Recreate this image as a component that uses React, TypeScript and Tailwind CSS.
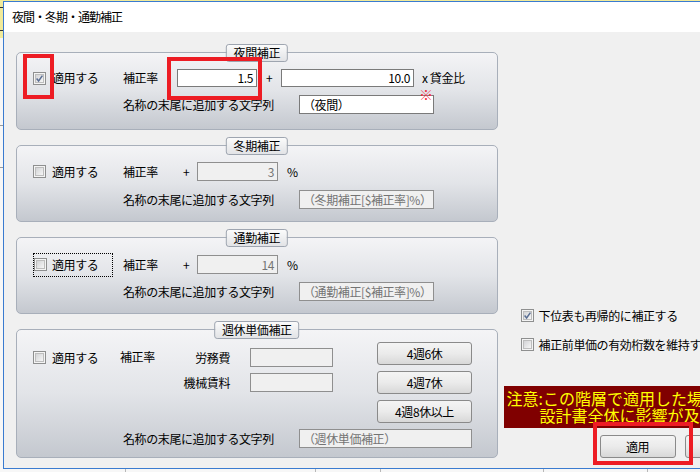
import type { ReactNode } from 'react';

function Check({ checked = false }: { checked?: boolean }) {
  return (
    <span className="relative w-[13px] h-[13px] flex-shrink-0 border border-[#8e8f8f] bg-[#f4f4f4] p-[1px] flex">
      <span className="flex-1 border border-[#bdbdbd] bg-linear-to-br from-[#d3d4d6] to-[#f6f6f6]" />
      {checked && (
        <svg width="13" height="13" viewBox="0 0 13 13" className="absolute -left-px -top-px">
          <path d="M3.6 6.6 L5.6 9 L9.4 3.6" fill="none" stroke="#5a6e93" strokeWidth="1.5" />
        </svg>
      )}
    </span>
  );
}

interface FieldProps {
  value?: string;
  className?: string;
  right?: boolean;
  disabled?: boolean;
}

function Field({ value = '', className = '', right = false, disabled = false }: FieldProps) {
  return (
    <div
      className={`flex items-center px-[3px] border whitespace-nowrap overflow-hidden ${
        disabled ? 'bg-[#f0f0f0] border-[#8f8f8f] text-[#747474]' : 'bg-white border-[#7a7a7a] text-black'
      } ${right ? 'justify-end' : ''} ${className}`}
    >
      {value}
    </div>
  );
}

function Btn({ label, className = '' }: { label: string; className?: string }) {
  return (
    <div
      className={`flex items-center justify-center rounded-[3px] border border-[#8a8a8a] bg-linear-to-b from-[#f4f4f4] via-[#ebebeb] to-[#d8d8d8] whitespace-nowrap ${className}`}
    >
      {label}
    </div>
  );
}

function Group({ title, className = '', children }: { title: string; className?: string; children: ReactNode }) {
  return (
    <div
      className={`relative rounded-[5px] border border-[#a8afba] bg-linear-to-b from-[#f4f4f6] via-[#e2e4e8] to-[#c4c8cf] pl-[16px] ${className}`}
    >
      <div className="absolute -top-[9px] left-1/2 -translate-x-1/2 h-[18px] px-[7px] flex items-center rounded-[3px] border border-[#9ea5b0] bg-linear-to-b from-[#fbfbfb] to-[#e2e3e6] whitespace-nowrap">
        {title}
      </div>
      {children}
    </div>
  );
}

function Apply({ checked = false, focused = false }: { checked?: boolean; focused?: boolean }) {
  if (focused) {
    return (
      <div className="w-[90px] flex items-center">
        <div className="w-[80px] h-[24px] flex-shrink-0 border border-dotted border-black flex items-center gap-[5px]">
          <Check checked={checked} />
          <span>適用する</span>
        </div>
      </div>
    );
  }
  return (
    <div className="w-[90px] flex items-center gap-[6px]">
      <Check checked={checked} />
      <span>適用する</span>
    </div>
  );
}

export default function App() {
  return (
    <div className="relative w-[700px] h-[472px] overflow-hidden bg-[#f7f7f7] font-['Noto_Sans_CJK_JP',sans-serif] text-[12px] leading-[16px] tracking-[-0.4px] text-black">
      {/* spreadsheet behind the dialog */}
      <div className="absolute inset-x-0 top-0 h-[38px] bg-[#f1ea9a]" />
      <div className="absolute left-0 w-[3px] top-[7px] h-px bg-[#333]" />
      <div className="absolute left-0 w-[3px] top-[30px] h-px bg-[#333]" />
      <div className="absolute left-0 w-[3px] top-[125px] h-px bg-[#9a9a9a]" />
      <div className="absolute left-0 w-[3px] top-[167px] h-px bg-[#9a9a9a]" />
      <div className="absolute left-[125px] top-[469px] w-px h-[3px] bg-[#b8b8b8]" />
      <div className="absolute left-[315px] top-[469px] w-px h-[3px] bg-[#b8b8b8]" />
      <div className="absolute left-[380px] top-[469px] w-px h-[3px] bg-[#b8b8b8]" />
      <div className="absolute left-[543px] top-[469px] w-px h-[3px] bg-[#b8b8b8]" />
      <div className="absolute left-[647px] top-[469px] w-px h-[3px] bg-[#b8b8b8]" />

      {/* dialog window */}
      <div className="absolute left-[3px] top-[1px] w-[760px] h-[468px] border border-[#3a7bd0] bg-[#f0f0f0] flex flex-col">
        <div className="h-[30px] bg-white flex items-center pl-[8px] tracking-[-1px]">夜間・冬期・通勤補正</div>

        <div className="flex-1 flex pt-[20px] pl-[12px]">
          <div className="w-[487px] flex flex-col">
            <Group title="夜間補正" className="h-[78px]">
              <div className="flex items-center h-[18px] mt-[16px]">
                <Apply checked />
                <span className="w-[54px]">補正率</span>
                <Field value="1.5" right className="w-[80px] h-[18px]" />
                <span className="w-[24px] pl-[9px]">+</span>
                <Field value="10.0" right className="w-[133px] h-[18px]" />
                <span className="ml-[8px]">x 貸金比</span>
              </div>
              <div className="flex items-center mt-[8px]">
                <span className="ml-[90px] w-[176px]">名称の末尾に追加する文字列</span>
                <Field value="（夜間）" className="w-[135px] h-[19px]" />
              </div>
            </Group>

            <Group title="冬期補正" className="h-[77px] mt-[15px]">
              <div className="flex items-center h-[19px] mt-[16px]">
                <Apply />
                <span className="w-[60px]">補正率</span>
                <span className="w-[14px]">+</span>
                <Field value="3" right disabled className="w-[81px] h-[19px]" />
                <span className="ml-[9px]">%</span>
              </div>
              <div className="flex items-center mt-[9px]">
                <span className="ml-[90px] w-[176px]">名称の末尾に追加する文字列</span>
                <Field value="（冬期補正[$補正率]%）" disabled className="w-[135px] h-[19px]" />
              </div>
            </Group>

            <Group title="通勤補正" className="h-[77px] mt-[15px]">
              <div className="flex items-center h-[19px] mt-[17px]">
                <Apply focused />
                <span className="w-[60px]">補正率</span>
                <span className="w-[14px]">+</span>
                <Field value="14" right disabled className="w-[81px] h-[19px]" />
                <span className="ml-[9px]">%</span>
              </div>
              <div className="flex items-center mt-[8px]">
                <span className="ml-[90px] w-[176px]">名称の末尾に追加する文字列</span>
                <Field value="（通勤補正[$補正率]%）" disabled className="w-[135px] h-[19px]" />
              </div>
            </Group>

            <Group title="週休単価補正" className="h-[129px] mt-[15px]">
              <div className="flex mt-[12px]">
                <div className="w-[87px] pt-[9px] flex items-center gap-[6px] h-[22px]">
                  <Check />
                  <span>適用する</span>
                </div>
                <div className="w-[63px] pt-[7px]">補正率</div>
                <div className="flex flex-col gap-[6px] pt-[6px]">
                  <div className="flex items-center">
                    <span className="w-[47px] text-right">労務費</span>
                    <Field disabled className="ml-[20px] w-[83px] h-[19px]" />
                  </div>
                  <div className="flex items-center">
                    <span className="w-[47px] text-right whitespace-nowrap">機械賃料</span>
                    <Field disabled className="ml-[20px] w-[83px] h-[19px]" />
                  </div>
                </div>
                <div className="ml-[44px] flex flex-col gap-[6px]">
                  <Btn label="4週6休" className="w-[95px] h-[23px]" />
                  <Btn label="4週7休" className="w-[95px] h-[23px]" />
                  <Btn label="4週8休以上" className="w-[95px] h-[23px]" />
                </div>
              </div>
              <div className="flex items-center mt-[6px]">
                <span className="ml-[90px] w-[176px]">名称の末尾に追加する文字列</span>
                <Field value="（週休単価補正）" disabled className="w-[173px] h-[19px]" />
              </div>
            </Group>
          </div>

          <div className="flex-1 flex flex-col pl-[6px]">
            <div className="mt-[257px] pl-[17px] flex items-center gap-[5px] h-[13px] whitespace-nowrap">
              <Check checked />
              <span>下位表も再帰的に補正する</span>
            </div>
            <div className="mt-[16px] pl-[17px] flex items-center gap-[5px] h-[13px] whitespace-nowrap">
              <Check />
              <span>補正前単価の有効桁数を維持する</span>
            </div>
            <div className="mt-[35px] h-[42px] bg-[#800000] text-[#ffff00] text-[16px] leading-[17px] pt-[4px] whitespace-nowrap tracking-normal">
              <div className="pl-[3px]">注意:この階層で適用した場合、</div>
              <div className="pl-[36px]">設計書全体に影響が及びます。</div>
            </div>
            <div className="mt-[7px] flex gap-[9px] pl-[96px]">
              <Btn label="適用" className="w-[76px] h-[23px]" />
              <Btn label="閉じる" className="w-[76px] h-[23px]" />
            </div>
          </div>
        </div>
      </div>

      {/* red annotations */}
      <div className="absolute left-[23px] top-[54px] w-[31px] h-[45px] border-[4px] border-[#ed1c24]" />
      <div className="absolute left-[167px] top-[57px] w-[95px] h-[43px] border-[4px] border-[#ed1c24]" />
      <div className="absolute left-[593px] top-[422px] w-[100px] h-[43px] border-[4px] border-[#ed1c24]" />
      <div className="absolute left-[419px] top-[86px] text-[14px] leading-[16px] text-[#f0303e]">※</div>
    </div>
  );
}
